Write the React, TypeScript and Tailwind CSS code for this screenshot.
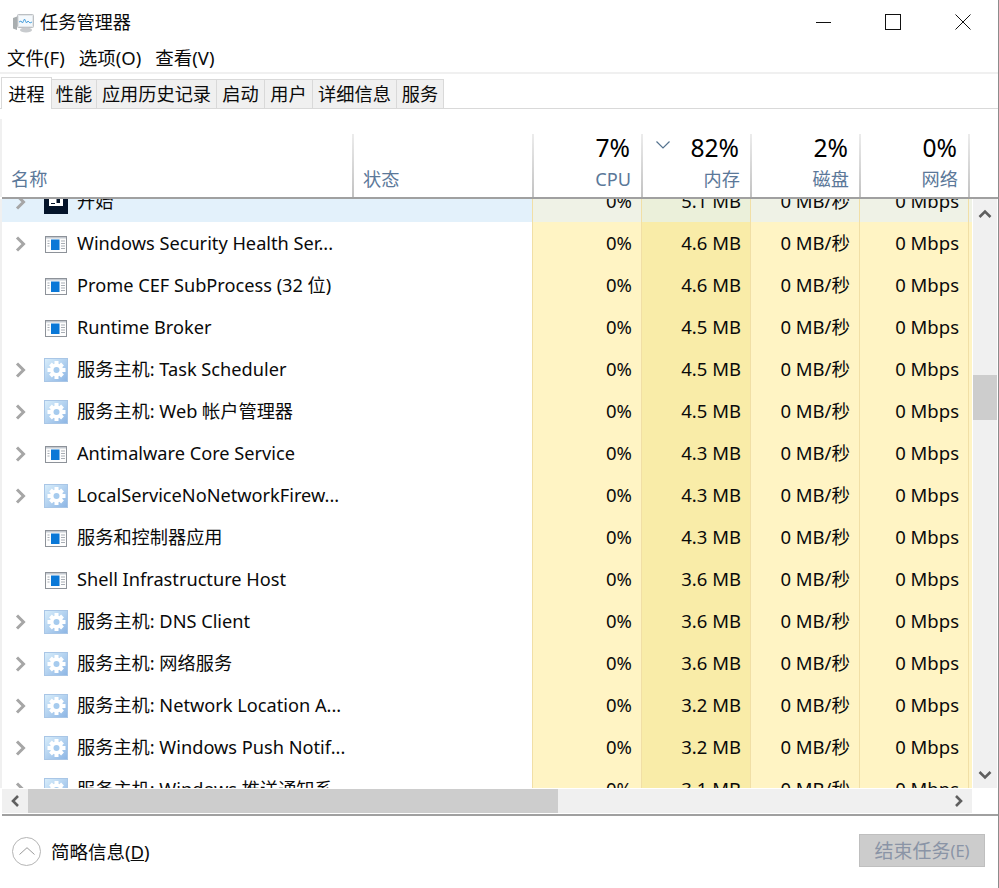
type Icon = 'gear' | 'app' | 'start';

type Row = {
  name: string;
  icon: Icon;
  mem: string;
  expand: boolean;
};

const rows: Row[] = [
  { name: '开始', icon: 'start', mem: '5.1 MB', expand: true },
  { name: 'Windows Security Health Ser...', icon: 'app', mem: '4.6 MB', expand: true },
  { name: 'Prome CEF SubProcess (32 位)', icon: 'app', mem: '4.6 MB', expand: false },
  { name: 'Runtime Broker', icon: 'app', mem: '4.5 MB', expand: false },
  { name: '服务主机: Task Scheduler', icon: 'gear', mem: '4.5 MB', expand: true },
  { name: '服务主机: Web 帐户管理器', icon: 'gear', mem: '4.5 MB', expand: true },
  { name: 'Antimalware Core Service', icon: 'app', mem: '4.3 MB', expand: true },
  { name: 'LocalServiceNoNetworkFirew...', icon: 'gear', mem: '4.3 MB', expand: true },
  { name: '服务和控制器应用', icon: 'app', mem: '4.3 MB', expand: false },
  { name: 'Shell Infrastructure Host', icon: 'app', mem: '3.6 MB', expand: false },
  { name: '服务主机: DNS Client', icon: 'gear', mem: '3.6 MB', expand: true },
  { name: '服务主机: 网络服务', icon: 'gear', mem: '3.6 MB', expand: true },
  { name: '服务主机: Network Location A...', icon: 'gear', mem: '3.2 MB', expand: true },
  { name: '服务主机: Windows Push Notif...', icon: 'gear', mem: '3.2 MB', expand: true },
  { name: '服务主机: Windows 推送通知系...', icon: 'gear', mem: '3.1 MB', expand: true },
];

const tabs = [
  { label: '性能', w: 'w-[45px]' },
  { label: '应用历史记录', w: 'w-[120px]' },
  { label: '启动', w: 'w-[48px]' },
  { label: '用户', w: 'w-[48px]' },
  { label: '详细信息', w: 'w-[84px]' },
  { label: '服务', w: 'w-[47px]' },
];

function RowIcon({ icon }: { icon: Icon }) {
  if (icon === 'start') {
    return (
      <svg width="24" height="24" viewBox="0 0 24 24" className="shrink-0 mt-[2px]">
        <rect width="24" height="24" fill="#04142a" />
        <rect x="5" y="4" width="14" height="12" fill="#fff" />
        <rect x="12.5" y="6" width="3.5" height="7" fill="#04142a" />
        <rect x="7" y="13" width="4" height="1" fill="#04142a" />
      </svg>
    );
  }
  if (icon === 'app') {
    return (
      <svg width="24" height="24" viewBox="0 0 24 24" className="shrink-0 mt-[2px]">
        <rect x="1.5" y="4.5" width="21" height="16" fill="#fdfdfd" stroke="#8d9299" />
        <rect x="2" y="5" width="20" height="1.5" fill="#c4c9d0" />
        <rect x="7" y="7.5" width="8.5" height="10.5" fill="#0a78d7" />
        <path d="M3.5 9h2M3.5 11.5h2M3.5 14h2M17 9h4M17 11.5h4M17 14h4M17 16.5h4" stroke="#a9aeb5" strokeWidth="1" />
      </svg>
    );
  }
  return (
    <svg width="24" height="24" viewBox="0 0 24 24" className="shrink-0 mt-[2px]">
      <defs>
        <linearGradient id="gearbg" x1="0" y1="0" x2="1" y2="1">
          <stop offset="0" stopColor="#d9eefb" />
          <stop offset="1" stopColor="#8cb5e4" />
        </linearGradient>
      </defs>
      <rect x="0.5" y="0.5" width="23" height="23" fill="url(#gearbg)" stroke="#a9c6e6" />
      <g fill="#fff">
        <circle cx="12.5" cy="12" r="6.5" />
        <rect x="10.5" y="3" width="4" height="18" />
        <rect x="3.5" y="10" width="18" height="4" />
        <rect x="10.5" y="3.5" width="4" height="17" transform="rotate(45 12.5 12)" />
        <rect x="10.5" y="3.5" width="4" height="17" transform="rotate(-45 12.5 12)" />
      </g>
      <circle cx="12.5" cy="12" r="3" fill="#a6cbee" />
    </svg>
  );
}

function Sep() {
  return <div className="w-[2px] h-full shrink-0 bg-gradient-to-b from-[#ececec] to-[#c2c2c2]" />;
}

function HeadCell({ pct, label, sort }: { pct: string; label: string; sort?: boolean }) {
  return (
    <div className="w-[109px] h-full shrink-0 flex">
      <Sep />
      <div className="relative flex-1 pr-[10px] flex flex-col items-end">
        {sort && (
          <svg width="14" height="8" viewBox="0 0 14 8" className="absolute left-[13px] top-[7px]">
            <path d="M0.5 0.5L7 7L13.5 0.5" fill="none" stroke="#55738f" strokeWidth="1.2" />
          </svg>
        )}
        <span className="text-[24.6px] leading-[28px] text-black pr-[1px]">{pct}</span>
        <span className="text-[18.2px] leading-[26px] text-[#5b7899] mt-[4px]">{label}</span>
      </div>
    </div>
  );
}

function ArrowH({ dir }: { dir: 'left' | 'right' }) {
  return (
    <svg width="10" height="12" viewBox="0 0 10 12">
      <path d={dir === 'left' ? 'M8 1L3 6L8 11' : 'M2 1L7 6L2 11'} fill="none" stroke="#5f5f5f" strokeWidth="2.6" />
    </svg>
  );
}

function ArrowV({ dir }: { dir: 'up' | 'down' }) {
  return (
    <svg width="14" height="9" viewBox="0 0 14 9">
      <path d={dir === 'up' ? 'M1.5 8L7 2.5L12.5 8' : 'M1.5 1L7 6.5L12.5 1'} fill="none" stroke="#5f5f5f" strokeWidth="2.6" />
    </svg>
  );
}

export default function App() {
  return (
    <div
      className="w-[999px] h-[888px] bg-white overflow-hidden border-r border-[#8c8c8c] flex flex-col text-[#0a0a0a] text-[18.2px]"
      style={{ fontFamily: '"Noto Sans", "Noto Sans CJK SC", sans-serif' }}
    >
      {/* 标题栏 */}
      <div className="h-[44px] shrink-0 flex items-center pl-[13px]">
        <svg width="21" height="20" viewBox="0 0 21 20" className="shrink-0 mt-[1px]">
          <path d="M0 5l4-1.5V17l-4-1.5z" fill="#a9aeb0" />
          <rect x="4.5" y="1.5" width="16" height="13" rx="1" fill="#e4e7e9" stroke="#bcc0c4" />
          <rect x="6" y="3" width="13" height="10" fill="#f4f9fd" />
          <path d="M6 9l2-1 1.5 2 2-4 2 4 1.5-2 2 2 2-1" fill="none" stroke="#4fa3dc" strokeWidth="1" />
          <ellipse cx="13" cy="17" rx="6" ry="2.6" fill="#c8cbce" />
        </svg>
        <span className="ml-[6px] mt-[2px]">任务管理器</span>
        <div className="ml-auto flex items-center">
          <svg width="16" height="16" viewBox="0 0 16 16" className="mr-[53px]">
            <path d="M0 8.5h15" stroke="#111" />
          </svg>
          <svg width="16" height="16" viewBox="0 0 16 16" className="mr-[54px]">
            <rect x="0.5" y="0.5" width="15" height="15" fill="none" stroke="#111" />
          </svg>
          <svg width="16" height="16" viewBox="0 0 16 16" className="mr-[27px]">
            <path d="M0.5 0.5l15 15M15.5 0.5l-15 15" stroke="#111" />
          </svg>
        </div>
      </div>

      {/* 菜单 */}
      <div className="h-[28px] shrink-0 flex items-center pl-[7px] gap-[14px] text-[18.5px]">
        <span>文件(F)</span>
        <span>选项(O)</span>
        <span>查看(V)</span>
      </div>
      <div className="h-[2px] shrink-0 bg-[#f0f0f0]" />

      {/* 标签 */}
      <div className="h-[35px] shrink-0 flex items-end border-b border-[#d9d9d9] pl-[1px]">
        <div className="h-[32px] w-[51px] -mb-px pt-[2px] bg-white border border-b-0 border-[#d9d9d9] flex items-center justify-center">进程</div>
        {tabs.map((t) => (
          <div key={t.label} className={`${t.w} h-[29px] pt-[2px] bg-[#f0f0f0] border-r border-t border-[#d9d9d9] flex items-center justify-center`}>
            {t.label}
          </div>
        ))}
      </div>

      {/* 表头 */}
      <div className="h-[10px] shrink-0" />
      <div className="h-[78px] shrink-0 flex flex-col border-l-2 border-[#f0f0f0]">
        <div className="h-[15px] shrink-0" />
        <div className="flex-1 flex min-h-0">
          <div className="w-[350px] shrink-0 flex items-end pl-[9px] pb-[4px] text-[#5b7899]">名称</div>
          <div className="w-[180px] shrink-0 flex">
            <Sep />
            <div className="flex-1 flex items-end pl-[9px] pb-[4px] text-[#5b7899]">状态</div>
          </div>
          <HeadCell pct="7%" label="CPU" />
          <HeadCell pct="82%" label="内存" sort />
          <HeadCell pct="2%" label="磁盘" />
          <HeadCell pct="0%" label="网络" />
          <Sep />
        </div>
      </div>
      <div className="h-[2px] shrink-0 ml-[2px] bg-[#a0a0a0]" />

      {/* 列表 */}
      <div className="h-[589px] shrink-0 flex overflow-hidden">
        <div className="w-[973px] shrink-0 overflow-hidden border-l-2 border-[#f0f0f0]">
          <div className="-mt-[19px]">
            {rows.map((r, i) => (
              <div key={i} className={`h-[42px] w-[970px] flex ${i === 0 ? 'bg-[#e3f1fb]' : ''}`}>
                <div className="w-[530px] shrink-0 flex items-center">
                  <div className="w-[42px] shrink-0 pl-[13px] flex items-center mt-[2px]">
                    {r.expand && (
                      <svg width="11" height="16" viewBox="0 0 11 16">
                        <path d="M2 1.5L8.5 8L2 14.5" fill="none" stroke="#a6a6a6" strokeWidth="3" />
                      </svg>
                    )}
                  </div>
                  <RowIcon icon={r.icon} />
                  <span className="ml-[9px] mt-[2px] whitespace-nowrap">{r.name}</span>
                </div>
                {[
                  { v: '0%', c: i === 0 ? 'bg-[#eff2e6]' : 'bg-[#fff4c4]' },
                  { v: r.mem, c: i === 0 ? 'bg-[#ebf0da]' : 'bg-[#f9eca8]' },
                  { v: '0 MB/秒', c: i === 0 ? 'bg-[#eff2e6]' : 'bg-[#fff4c4]' },
                  { v: '0 Mbps', c: i === 0 ? 'bg-[#eff2e6]' : 'bg-[#fff4c4]' },
                ].map((cell, j) => (
                  <div
                    key={j}
                    className={`w-[109px] shrink-0 flex items-center justify-end pr-[9px] text-[18.5px] border-l border-[#f1dfa6] ${cell.c}`}
                  >
                    {cell.v}
                  </div>
                ))}
                <div className={`w-[4px] shrink-0 border-l border-[#f1dfa6] ${i === 0 ? 'bg-[#eff2e6]' : 'bg-[#fff4c4]'}`} />
              </div>
            ))}
          </div>
        </div>
        <div className="w-[24px] shrink-0 bg-[#f0f0f0] flex flex-col items-center pt-[10px] pb-[8px]">
          <ArrowV dir="up" />
          <div className="w-full h-[45px] bg-[#cdcdcd] mt-[157px]" />
          <div className="mt-auto">
            <ArrowV dir="down" />
          </div>
        </div>
      </div>

      {/* 横向滚动条 */}
      <div className="h-[24px] shrink-0 mt-px ml-[2px] w-[970px] bg-[#f0f0f0] flex items-center">
        <div className="w-[26px] flex justify-center">
          <ArrowH dir="left" />
        </div>
        <div className="w-[530px] h-full bg-[#cdcdcd]" />
        <div className="ml-auto w-[26px] flex justify-center">
          <ArrowH dir="right" />
        </div>
      </div>
      <div className="h-[2px] shrink-0 mt-px bg-[#a0a0a0] ml-[2px]" />

      {/* 底部 */}
      <div className="flex-1 flex items-center pl-[12px] pr-[13px]">
        <div className="w-[29px] h-[29px] mb-[2px] rounded-full border border-[#b5b5b5] flex items-center justify-center">
          <svg width="16" height="8" viewBox="0 0 16 8">
            <path d="M0.5 7.5L8 0.7L15.5 7.5" fill="none" stroke="#999" strokeWidth="1" />
          </svg>
        </div>
        <span className="ml-[10px] text-[18.5px]">简略信息(<span className="underline">D</span>)</span>
        <div className="ml-auto w-[126px] h-[33px] mb-[3px] pt-[1px] bg-[#cccccc] border border-[#bfbfbf] flex items-center justify-center text-[19px] text-[#8a94a6]">
          结束任务<span className="text-[16.5px]">(E)</span>
        </div>
      </div>
    </div>
  );
}
